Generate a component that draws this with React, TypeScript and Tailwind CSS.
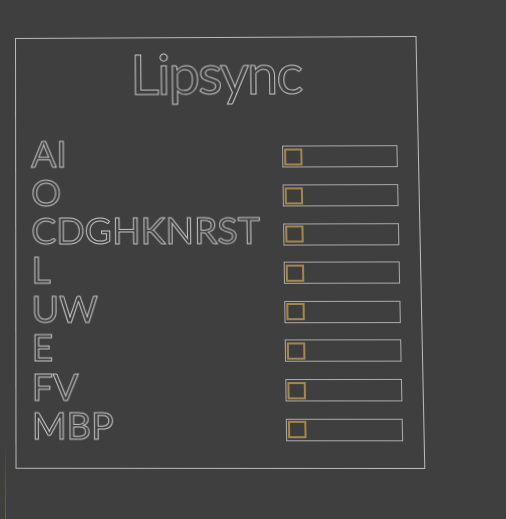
import React from "react";

// Outline text, like the hollow Gill-style lettering in the panel
const OUTLINE =
  "font-['Lato','Open_Sans',sans-serif] text-transparent [-webkit-text-stroke:1px_#c2c2c2]";

const VISEMES = ["AI", "O", "CDGHKNRST", "L", "UW", "E", "FV", "MBP"];

function VisemeSlider() {
  return (
    <div className="mt-[12.3px] h-[22px] w-[114px] border-[1.5px] border-[#a9a9a9]">
      <div className="ml-[1px] mt-[1.5px] h-[17px] w-[18px] border-2 border-[#a3864a] bg-[#3d3d3d]" />
    </div>
  );
}

function VisemeRow({ label }: { label: string }) {
  return (
    <div className="grid h-[38.6px] grid-cols-[249px_114px] items-start">
      <span className={`${OUTLINE} text-[37px] leading-[38.6px] whitespace-nowrap`}>{label}</span>
      <VisemeSlider />
    </div>
  );
}

export default function App() {
  return (
    <div className="relative min-h-screen w-full overflow-hidden bg-[#3f3f3f] pl-[15px] pt-[38px]">
      {/* panel, seen slightly in perspective */}
      <div className="h-[430px] w-[400px] origin-top-left border border-[#bababa] pl-[15px] pt-[8px] [transform:matrix3d(0.998656,-0.0049746,0,-0.00001269,0.0011395,0.981692,0,-0.00004685,0,0,1,0,0,0,0,1)]">
        <div className={`${OUTLINE} -ml-[15px] text-center text-[56px] leading-none tracking-[-2px]`}>
          Lipsync
        </div>
        <div className="mt-[33.2px] flex flex-col">
          {VISEMES.map((v) => (
            <VisemeRow key={v} label={v} />
          ))}
        </div>
      </div>

      {/* faint green streak at bottom left */}
      <div className="absolute left-[5px] top-[440px] h-[80px] w-px bg-gradient-to-b from-transparent to-[#5d6c47]" />
    </div>
  );
}
